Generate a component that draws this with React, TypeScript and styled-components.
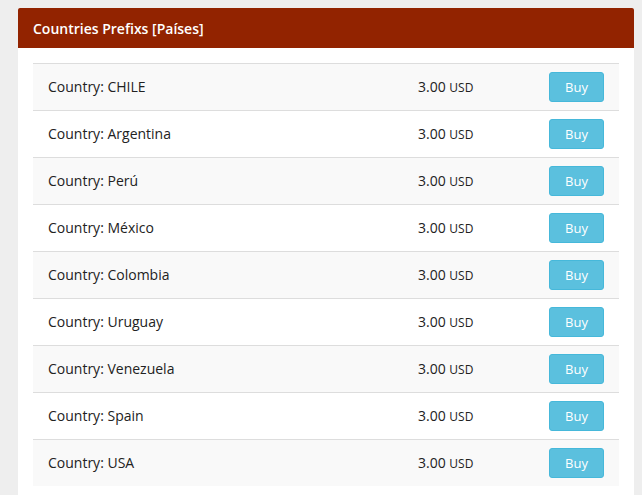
import React from "react";
import styled, { createGlobalStyle } from "styled-components";

const Global = createGlobalStyle`
  html, body { margin: 0; padding: 0; background: #eeeeee; }
  body { font-family: "Open Sans", "Liberation Sans", sans-serif; color: #333; }
`;

const Page = styled.div`
  padding: 8px 8px 0 18px;
  width: 642px;
  box-sizing: border-box;
  height: 495px;
  overflow: hidden;
`;

const Panel = styled.section`
  width: 616px;
  background: #ffffff;
  padding-bottom: 20px;
`;

const Header = styled.header`
  height: 40px;
  background: #922300;
  color: #ffffff;
  display: flex;
  align-items: center;
  padding: 0 15px;
  font-size: 14px;
  font-weight: 600;
  border-radius: 2px 2px 0 0;
`;

const Body = styled.div`
  padding: 15px 15px 0 15px;
`;

const Row = styled.div<{ $striped: boolean }>`
  display: grid;
  grid-template-columns: 370px 131px 1fr;
  align-items: center;
  height: 46px;
  border-top: 1px solid #dddddd;
  background: ${(p) => (p.$striped ? "#f9f9f9" : "#ffffff")};
  font-size: 14px;
  color: #222222;
`;

const Cell = styled.div<{ $text?: boolean }>`
  padding: 0 15px ${(p) => (p.$text ? "1px" : "0")} 15px;
  line-height: 20px;
`;

const Unit = styled.span`
  font-size: 12px;
  line-height: 1;
`;

const BuyButton = styled.button`
  width: 55px;
  height: 30px;
  display: block;
  background: #5bc0de;
  border: 1px solid #46b8da;
  border-radius: 3px;
  color: #ffffff;
  font-family: "Open Sans", "Liberation Sans", sans-serif;
  font-size: 13px;
  padding: 0;
  cursor: pointer;
`;

const countries = [
  "CHILE",
  "Argentina",
  "Perú",
  "México",
  "Colombia",
  "Uruguay",
  "Venezuela",
  "Spain",
  "USA",
];

export default function App() {
  return (
    <>
      <Global />
      <Page>
        <Panel>
          <Header>Countries Prefixs [Países]</Header>
          <Body>
            {countries.map((c, i) => (
              <Row key={c} $striped={i % 2 === 0}>
                <Cell $text>Country: {c}</Cell>
                <Cell $text>
                  3.00 <Unit>USD</Unit>
                </Cell>
                <Cell>
                  <BuyButton>Buy</BuyButton>
                </Cell>
              </Row>
            ))}
          </Body>
        </Panel>
      </Page>
    </>
  );
}
